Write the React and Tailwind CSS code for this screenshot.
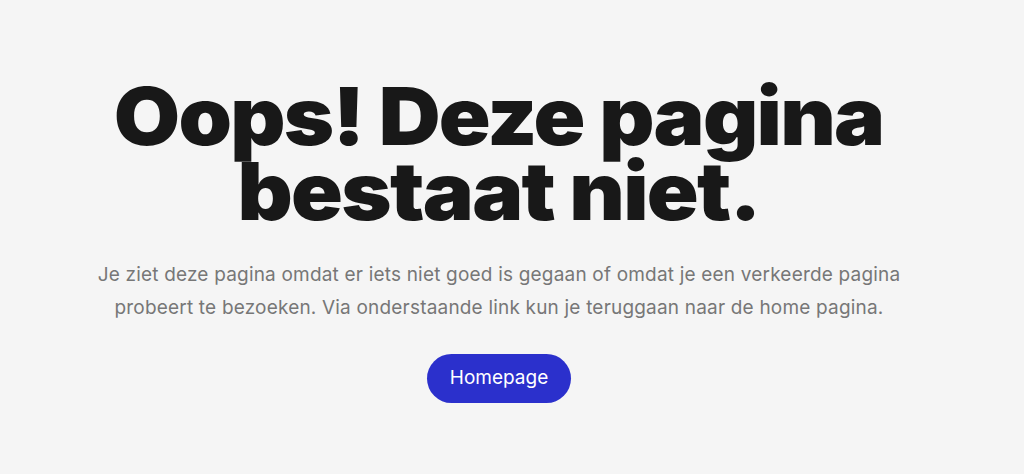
export default function App() {
  return (
    <div className="min-h-[474px] w-full bg-[#f5f5f5] flex flex-col items-center pt-[78px] pr-[26px] font-['Inter',sans-serif]">
      <h1 className="scale-x-[1.07] text-center font-black text-[80px] leading-[75px] tracking-[-0.02em] text-[#181818]">
        Oops! Deze pagina
        <br />
        bestaat niet.
      </h1>
      <p className="mt-[30px] max-w-[850px] text-center text-[19px] leading-[33px] tracking-[0.01em] text-[#777777]">
        Je ziet deze pagina omdat er iets niet goed is gegaan of omdat je een verkeerde pagina probeert te bezoeken. Via onderstaande link kun je teruggaan naar de home pagina.
      </p>
      <a
        href="#"
        className="mt-[30px] flex h-[49px] w-[144px] items-center justify-center rounded-full bg-[#2b30cc] text-[19px] text-white"
      >
        Homepage
      </a>
    </div>
  )
}
